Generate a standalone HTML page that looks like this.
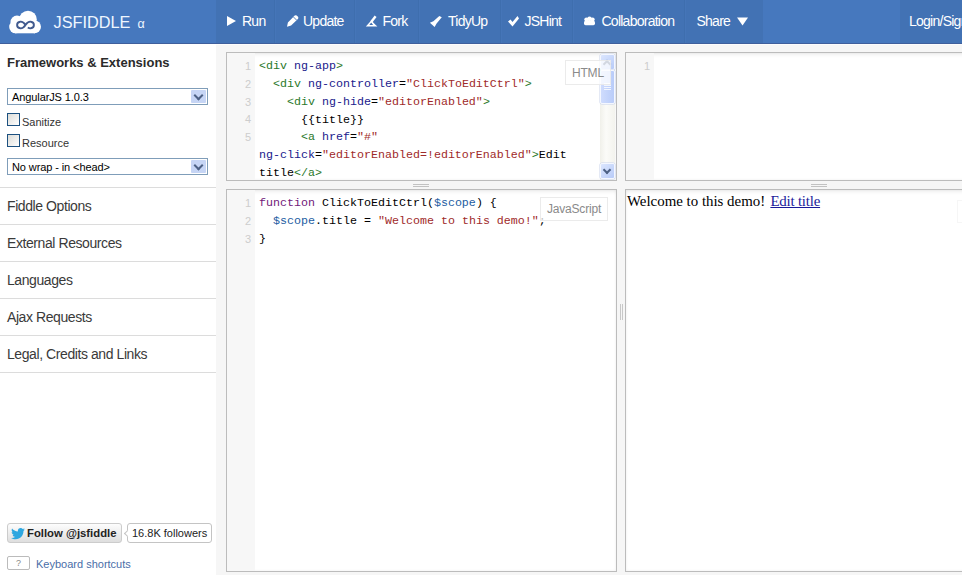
<!DOCTYPE html>
<html><head><meta charset="utf-8">
<style>
*{margin:0;padding:0;box-sizing:border-box}
html,body{width:962px;height:575px;overflow:hidden;background:#f6f6f6;font-family:"Liberation Sans",sans-serif;position:relative}
.abs{position:absolute}
#hdr{left:0;top:0;width:962px;height:44px;background:#4678be}
#hdr .band{top:0;height:44px;background:#4272b4}
#hdr .bl{left:0;top:43px;width:962px;height:1px;background:#3f5f9c}
.btn{position:absolute;top:0px;height:43px;color:#fff;font-size:14px;letter-spacing:-0.75px;line-height:43px;white-space:nowrap}
.sep{position:absolute;top:0;width:2px;height:43px;border-left:1px solid #3e6eae;border-right:1px solid #4575b8}
#side{left:0;top:44px;width:216px;height:531px;background:#fff}
.mi{position:absolute;left:0;width:216px;height:1px;background:#dcdcdc}
.mt{position:absolute;left:7px;font-size:14px;letter-spacing:-0.42px;color:#3a3a3a;line-height:16px}
.panel{position:absolute;background:#fff;border:1px solid #bcbcbc;box-shadow:inset 0 0 3px rgba(0,0,0,.07),inset 0 4px 4px -2px rgba(0,0,0,.06)}
.gut{position:absolute;left:0;top:0;bottom:0;width:28px;background:#f7f7f7}
.code{position:absolute;left:32px;top:5.2px;font-family:"Liberation Mono",monospace;font-size:11.667px;line-height:17.8px;white-space:pre;color:#000}
.ln{position:absolute;margin-top:1px;left:0;width:24px;text-align:right;font-family:"Liberation Sans",sans-serif;font-size:11px;color:#cdcdcd}
.t{color:#2a782a}.a{color:#20208c}.s{color:#a02a2a}.k{color:#72207a}.v{color:#1c5ca2}
.lbl{position:absolute;font-size:12px;color:#8a8a8a;background:rgba(255,255,255,.75);border:1px solid rgba(230,230,230,.8);padding:1px 6px 0;line-height:20.5px;letter-spacing:-0.2px}
.sel{background:#fff;border:1px solid #7f9db9;font-size:11px;color:#000}
.sel span{position:absolute;left:4px;top:1px;line-height:14px;letter-spacing:-0.1px}
.sel i{position:absolute;right:1px;top:1px;width:15px;height:13px;background:#c6d5f5;border-radius:1px}
.sel i:after{content:"";position:absolute;left:4px;top:3px;width:5px;height:5px;border-right:2px solid #4d6185;border-bottom:2px solid #4d6185;transform:translate(0,-1px) rotate(45deg)}
.cb{width:13px;height:13px;border:1px solid #1c5180;background:linear-gradient(135deg,#dcdcd7,#fff)}
.cbl{font-size:11px;color:#333;line-height:14px}
.tw{border:1px solid #ccc;border-radius:3px;background:linear-gradient(#fdfdfd,#dedede)}
.twc{border:1px solid #c4c4c4;border-radius:3px;background:#fff;font-size:11px;color:#222;line-height:18px}
.twc span{position:absolute;left:4px;top:0}
.twc b{position:absolute;left:-3.5px;top:6.5px;width:5px;height:5px;background:#fff;border-left:1px solid #c4c4c4;border-bottom:1px solid #c4c4c4;transform:rotate(45deg)}
.key{border:1px solid #bbb;border-radius:2px;background:#fff;font-size:9px;color:#888;text-align:center;line-height:12px}
.sb{background:linear-gradient(90deg,#f0f0ea,#fbfbf8 40%,#f3f3ee)}
.sbb{position:absolute;left:0;width:15px;height:16px;background:linear-gradient(135deg,#dbe6fe,#b8cbf8);border:1px solid #f4f7ff;border-radius:2px;box-shadow:0 0 0 0.5px #c9d4ec}
.sbb:after{content:"";position:absolute;left:3px;width:4px;height:4px;border-right:2px solid #4d6185;border-bottom:2px solid #4d6185}
.sbb.dn:after{top:3px;transform:rotate(45deg)}
.sbb.up:after{top:6px;transform:rotate(-135deg)}
.sbb.up{top:1px}.sbb.dn{top:110px}
.sbt{position:absolute;left:0;top:17px;width:15px;height:34px;background:linear-gradient(90deg,#cfdcfd,#b9ccf9);border:1px solid #f4f7ff;border-radius:2px;box-shadow:0 0 0 0.5px #c9d4ec}
.sbt:after{content:"";position:absolute;left:3px;top:12px;width:7px;height:8px;background:repeating-linear-gradient(#f2f6ff 0 1px,transparent 1px 2px)}
.hh{width:16px;height:3px;border-top:1px solid #c2c2c2;border-bottom:1px solid #c2c2c2}
.vh{width:3px;height:16px;border-left:1px solid #c8c8c8;border-right:1px solid #c8c8c8}
.res{font-family:"Liberation Serif",serif;font-size:14.9px;line-height:20px;color:#000;white-space:nowrap}
.res a{color:#1a1a9a;text-decoration:underline;margin-left:1.5px;letter-spacing:-0.2px}
</style></head><body>
<div id="hdr" class="abs">
  <div class="abs band" style="left:216px;width:547px"></div>
  <div class="abs band" style="left:900px;width:62px"></div>
  <svg class="abs" style="left:0;top:0" width="50" height="44" viewBox="0 0 50 44">
    <g fill="#fff">
      <circle cx="28" cy="19.5" r="8.8"/>
      <circle cx="17" cy="22" r="6.5"/>
      <circle cx="15.5" cy="27" r="6.3"/>
      <circle cx="34.6" cy="26.8" r="6.4"/>
      <rect x="15" y="20" width="20" height="13.3"/>
    </g>
    <path d="M25.5 25 C23.6 22.1 21.6 21.5 20.2 21.7 C18.1 22 17.1 23.5 17.1 25 C17.1 26.5 18.1 28 20.2 28.3 C21.6 28.5 23.6 27.9 25.5 25 C27.4 22.1 29.4 21.5 30.8 21.7 C32.9 22 33.9 23.5 33.9 25 C33.9 26.5 32.9 28 30.8 28.3 C29.6 28.5 28.6 28 27.8 27.5" fill="none" stroke="#415a8e" stroke-width="1.9"/>
  </svg>
  <div class="abs" style="left:53.5px;top:0;height:44px;line-height:44px;font-size:16.3px;color:#eef6ff">JSFIDDLE</div>
  <div class="abs" style="left:137.5px;top:2px;height:44px;line-height:44px;font-size:12.5px;color:#eef6ff">α</div>

  <div class="sep" style="left:274px"></div>
  <div class="sep" style="left:354px"></div>
  <div class="sep" style="left:418px"></div>
  <div class="sep" style="left:500px"></div>
  <div class="sep" style="left:572px"></div>
  <div class="sep" style="left:684px"></div>

  <svg class="abs" style="left:0;top:0" width="962" height="44">
    <g fill="#fff">
      <path d="M227 16 L236 21 L227 26 Z"/>
      <path d="M287 26.8 L287.9 22.4 L294.7 15.6 Q296.2 14.9 297.5 16.2 L298 16.8 Q298.9 18 297.9 18.9 L291.1 25.6 Z"/><path d="M293.4 16.9 L296.7 20.2" stroke="#4272b4" stroke-width="0.9"/>
      <path d="M375.6 16.2 L371.2 22" stroke="#fff" stroke-width="2.4" fill="none"/><path d="M371.2 20.4 L376 25.2 L377.4 26.6 L365.8 26.6 L367 25.2 Z M371.2 22.6 L369.3 24.9 L373.1 24.9 Z" fill-rule="evenodd"/>
      <path d="M439.3 16 L441.8 17.3 L436.6 23.6 L434.6 27 L429.9 22.7 L433.4 21.2 Z"/>
      <path d="M508 21.5 L510.5 19.5 L512.5 22 L517.5 16 L519 18.5 L512.5 26.5 Z"/>
      <circle cx="586.4" cy="19.6" r="2.1"/><circle cx="589.5" cy="18.9" r="2.3"/><circle cx="592.6" cy="19.6" r="2.1"/><rect x="584" y="20.8" width="11" height="4.4" rx="1.6"/>
      <path d="M737 17.5 L748 17.5 L742.5 25.5 Z"/>
    </g>
  </svg>
  <div class="btn" style="left:242px">Run</div>
  <div class="btn" style="left:303px">Update</div>
  <div class="btn" style="left:382.5px">Fork</div>
  <div class="btn" style="left:448px">TidyUp</div>
  <div class="btn" style="left:524.5px">JSHint</div>
  <div class="btn" style="left:601.5px">Collaboration</div>
  <div class="btn" style="left:696.5px">Share</div>
  <div class="btn" style="left:909px">Login/Sign in</div>
  <div class="abs bl"></div>
</div>
<div class="abs" style="left:216px;top:44px;width:746px;height:1px;background:#fcfcfc"></div>

<div id="side" class="abs">
  <div class="abs" style="left:7px;top:11px;font-size:13px;letter-spacing:0px;font-weight:bold;color:#2b2b2b;line-height:16px">Frameworks &amp; Extensions</div>
  <div class="sel abs" style="left:7px;top:44px;width:201px;height:17px"><span>AngularJS 1.0.3</span><i></i></div>
  <div class="cb abs" style="left:7px;top:69px"></div>
  <div class="abs cbl" style="left:22px;top:71px">Sanitize</div>
  <div class="cb abs" style="left:7px;top:90px"></div>
  <div class="abs cbl" style="left:22px;top:92px">Resource</div>
  <div class="sel abs" style="left:7px;top:114px;width:201px;height:17px"><span>No wrap - in &lt;head&gt;</span><i></i></div>
  <div class="mi" style="top:143px"></div>
  <div class="mt" style="top:154px">Fiddle Options</div>
  <div class="mi" style="top:180px"></div>
  <div class="mt" style="top:191px">External Resources</div>
  <div class="mi" style="top:217px"></div>
  <div class="mt" style="top:228px">Languages</div>
  <div class="mi" style="top:254px"></div>
  <div class="mt" style="top:265px">Ajax Requests</div>
  <div class="mi" style="top:291px"></div>
  <div class="mt" style="top:302px">Legal, Credits and Links</div>
  <div class="mi" style="top:328px"></div>

  <div class="abs tw" style="left:7px;top:479px;width:115px;height:20px">
    <svg class="abs" style="left:3px;top:4px" width="14" height="11.5" viewBox="0 0 24 20"><path fill="#2ea7e0" d="M24 2.4c-.9.4-1.8.6-2.8.8 1-.6 1.8-1.6 2.2-2.7-1 .6-2 1-3.1 1.2C19.3.7 18 .1 16.6.1c-2.7 0-4.9 2.2-4.9 4.9 0 .4 0 .8.1 1.1C7.7 5.9 4.1 4 1.7 1 1.2 1.8 1 2.6 1 3.5c0 1.7.9 3.2 2.2 4.1-.8 0-1.6-.2-2.2-.6v.1c0 2.4 1.7 4.4 3.9 4.8-.4.1-.8.2-1.3.2-.3 0-.6 0-.9-.1.6 2 2.4 3.4 4.6 3.4-1.7 1.3-3.8 2.1-6.1 2.1-.4 0-.8 0-1.2-.1 2.2 1.4 4.8 2.2 7.5 2.2 9.1 0 14-7.5 14-14v-.6c1-.7 1.8-1.6 2.5-2.5z"/></svg>
    <div class="abs" style="left:19px;top:0;line-height:19px;font-size:11.3px;font-weight:bold;color:#222">Follow @jsfiddle</div>
  </div>
  <div class="abs twc" style="left:127px;top:479px;width:85px;height:20px"><b></b><span>16.8K followers</span></div>
  <div class="abs key" style="left:7px;top:512px;width:23px;height:14px">?</div>
  <div class="abs" style="left:36px;top:513px;font-size:11px;color:#4a6ea8;line-height:14px">Keyboard shortcuts</div>
</div>

<!-- HTML panel -->
<div class="panel" style="left:226px;top:52px;width:391px;height:129px">
  <div class="gut"></div>
  <div class="ln" style="top:4px;line-height:17.8px">1<br>2<br>3<br>4<br>5</div>
  <div class="code"><span class="t">&lt;div</span> <span class="a">ng-app</span><span class="t">&gt;</span>
  <span class="t">&lt;div</span> <span class="a">ng-controller</span>=<span class="s">"ClickToEditCtrl"</span><span class="t">&gt;</span>
    <span class="t">&lt;div</span> <span class="a">ng-hide</span>=<span class="s">"editorEnabled"</span><span class="t">&gt;</span>
      {{title}}
      <span class="t">&lt;a</span> <span class="a">href</span>=<span class="s">"#"</span>
<span class="a">ng-click</span>=<span class="s">"editorEnabled=!editorEnabled"</span><span class="t">&gt;</span>Edit
title<span class="t">&lt;/a&gt;</span></div>
  <div class="sb abs" style="left:373px;top:0;width:15px;height:127px">
    <div class="sbb up"></div><div class="sbt"></div><div class="sbb dn"></div>
  </div>
  <div class="lbl" style="left:338px;top:7px;padding-top:2px">HTML</div>
</div>

<!-- CSS panel -->
<div class="panel" style="left:625px;top:52px;width:400px;height:129px">
  <div class="gut"></div>
  <div class="ln" style="top:4px;line-height:17.8px">1</div>
</div>

<div class="hh abs" style="left:413px;top:184px"></div>
<div class="hh abs" style="left:811px;top:184px"></div>
<div class="vh abs" style="left:620px;top:304px"></div>

<!-- JS panel -->
<div class="panel" style="left:226px;top:189px;width:391px;height:383px">
  <div class="gut"></div>
  <div class="ln" style="top:4px;line-height:17.8px">1<br>2<br>3</div>
  <div class="code"><span class="k">function</span> ClickToEditCtrl(<span class="v">$scope</span>) {
  <span class="v">$scope</span>.title = <span class="s">"Welcome to this demo!"</span>;
}</div>
  <div class="lbl" style="left:313px;top:7px">JavaScript</div>
</div>

<!-- Result panel -->
<div class="panel" style="left:625px;top:189px;width:400px;height:383px">
  <div class="lbl" style="left:331px;top:10px;width:60px;height:23px;border-color:#f6f6f6;background:transparent"></div>
  <div class="abs res" style="left:1px;top:1px">Welcome to this demo! <a>Edit title</a></div>
</div>

</body></html>
